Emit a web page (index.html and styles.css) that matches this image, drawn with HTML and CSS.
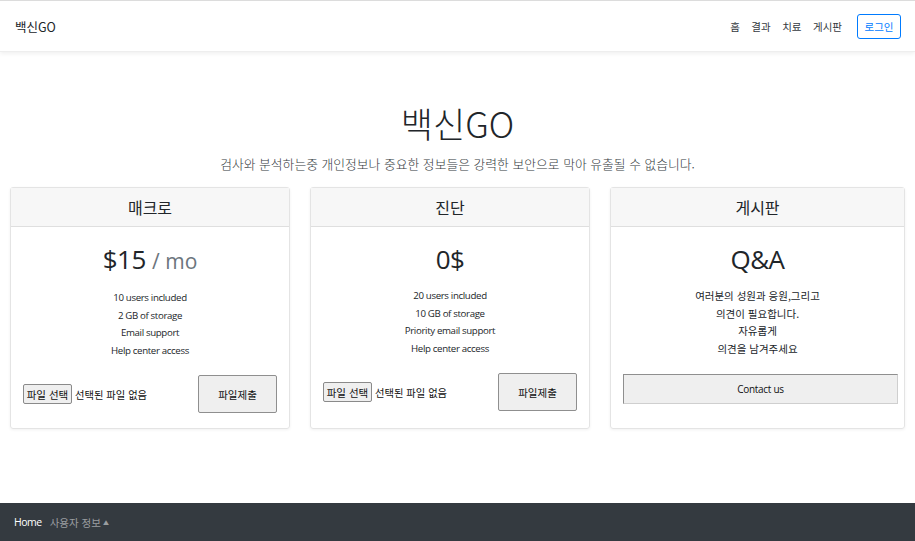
FILE: index.html
```html
<!DOCTYPE html>
<html lang="ko">
<head>
<meta charset="utf-8">
<title>백신GO</title>
<link rel="stylesheet" href="styles.css">
</head>
<body>
<header class="navbar">
  <a class="brand" href="#">백신GO</a>
  <nav class="nav">
    <a href="#">홈</a>
    <a href="#">결과</a>
    <a href="#">치료</a>
    <a href="#">게시판</a>
  </nav>
  <a class="login" href="#">로그인</a>
</header>

<section class="hero">
  <h1 class="title">백신GO</h1>
  <p class="lead">검사와 분석하는중 개인정보나 중요한 정보들은 강력한 보안으로 막아 유출될 수 없습니다.</p>
</section>

<main class="deck">
  <div class="card">
    <div class="card-header"><h4>매크로</h4></div>
    <div class="card-body">
      <h2 class="price">$15 <small>/ mo</small></h2>
      <ul class="features">
        <li>10 users included</li>
        <li>2 GB of storage</li>
        <li>Email support</li>
        <li>Help center access</li>
      </ul>
      <div class="upload">
        <div class="file"><span class="file-btn">파일 선택</span><span class="file-name">선택된 파일 없음</span></div>
        <button class="submit">파일제출</button>
      </div>
    </div>
  </div>
  <div class="card">
    <div class="card-header"><h4>진단</h4></div>
    <div class="card-body">
      <h2 class="price">0$</h2>
      <ul class="features">
        <li>20 users included</li>
        <li>10 GB of storage</li>
        <li>Priority email support</li>
        <li>Help center access</li>
      </ul>
      <div class="upload">
        <div class="file"><span class="file-btn">파일 선택</span><span class="file-name">선택된 파일 없음</span></div>
        <button class="submit">파일제출</button>
      </div>
    </div>
  </div>
  <div class="card">
    <div class="card-header"><h4>게시판</h4></div>
    <div class="card-body">
      <h2 class="price">Q&amp;A</h2>
      <ul class="features ko">
        <li>여러분의 성원과 응원,그리고</li>
        <li>의견이 필요합니다.</li>
        <li>자유롭게</li>
        <li>의견을 남겨주세요</li>
      </ul>
      <button class="contact">Contact us</button>
    </div>
  </div>
</main>

<footer class="footer">
  <a class="foot-home" href="#">Home</a>
  <a class="foot-user" href="#">사용자 정보<span class="caret">▲</span></a>
</footer>
</body>
</html>
```
FILE: styles.css
```css
* { box-sizing: border-box; }
html, body { margin: 0; padding: 0; }
body {
  width: 915px;
  height: 541px;
  overflow: hidden;
  font-family: "Open Sans", "Noto Sans CJK KR", sans-serif;
  color: #212529;
  background: #fff;
  display: flex;
  flex-direction: column;
  font-size: 11px;
}
a { text-decoration: none; }

.navbar {
  height: 52px;
  border-top: 1px solid #dcdcdc;
  display: flex;
  align-items: center;
  padding: 0 14px 0 15px;
  box-shadow: 0 2px 4px rgba(0,0,0,0.06);
  border-bottom: 1px solid #eeeeee;
}
.brand {
  font-family: "Noto Sans CJK KR", sans-serif;
  font-size: 12.5px;
  color: #212529;
  margin-right: auto;
}
.nav { display: flex; gap: 11.5px; margin-right: 15px; }
.nav a {
  font-family: "Noto Sans CJK KR", sans-serif;
  font-size: 10.5px;
  color: #343a40;
}
.login {
  font-family: "Noto Sans CJK KR", sans-serif;
  font-size: 10.5px;
  color: #007bff;
  border: 1px solid #007bff;
  border-radius: 3px;
  height: 25px;
  width: 44px;
  display: flex;
  align-items: center;
  justify-content: center;
}

.hero {
  text-align: center;
  padding-top: 47px;
}
.title {
  margin: 0;
  font-family: "Noto Sans CJK KR", sans-serif;
  font-weight: 300;
  font-size: 35px;
  line-height: 48px;
  color: #212529;
}
.lead {
  margin: 7px 0 0;
  font-family: "Noto Sans CJK KR", sans-serif;
  font-weight: 300;
  font-size: 12.8px;
  line-height: 20px;
  color: #343a40;
}

.deck {
  margin-top: 13px;
  padding: 0 10px;
  display: grid;
  grid-template-columns: 280px 280px 1fr;
  column-gap: 20px;
}
.card {
  border: 1px solid #e4e4e4;
  border-radius: 3px;
  box-shadow: 0 1px 3px rgba(0,0,0,0.06);
  height: 242px;
  display: flex;
  flex-direction: column;
}
.card-header {
  height: 39px;
  background: #f7f7f7;
  border-bottom: 1px solid #dfdfdf;
  display: flex;
  align-items: center;
  justify-content: center;
}
.card-header h4 {
  margin: 0;
  font-family: "Noto Sans CJK KR", sans-serif;
  font-weight: 400;
  font-size: 16px;
  color: #212529;
}
.card-body {
  padding: 13px 12px 0;
  text-align: center;
  display: flex;
  flex-direction: column;
}
.price {
  margin: 0;
  font-size: 26px;
  line-height: 38px;
  font-weight: 500;
  color: #212529;
  letter-spacing: -0.5px;
}
.price small {
  font-weight: 400;
  color: #6c757d;
  font-size: 21px;
  letter-spacing: 0;
}
.features {
  list-style: none;
  margin: 9px 0 0;
  padding: 0;
}
.features li {
  font-family: "Open Sans", "Noto Sans CJK KR", sans-serif;
  font-size: 9.7px;
  line-height: 17.6px;
  color: #212529;
  letter-spacing: -0.35px;
}
.features.ko li {
  font-family: "Noto Sans CJK KR", sans-serif;
  font-size: 10.5px;
  letter-spacing: 0;
}
.upload {
  margin-top: 16px;
  display: flex;
  align-items: center;
  justify-content: space-between;
}
.file { display: flex; align-items: center; }
.file-btn {
  font-family: "Noto Sans CJK KR", sans-serif;
  font-size: 10.5px;
  height: 20px;
  width: 49px;
  display: flex;
  align-items: center;
  justify-content: center;
  background: #efefef;
  border: 1px solid #8a8a8a;
  border-radius: 2px;
  color: #111;
}
.file-name {
  font-family: "Noto Sans CJK KR", sans-serif;
  font-size: 10.3px;
  margin-left: 3px;
  color: #111;
}
.submit {
  font-family: "Noto Sans CJK KR", sans-serif;
  font-size: 10.5px;
  width: 79px;
  height: 38px;
  background: #efefef;
  border: 1px solid #8f8f8f;
  border-radius: 2px;
  color: #111;
  padding: 0;
}
.contact {
  margin-top: 17px;
  width: calc(100% + 6px);
  height: 30px;
  font-family: "Open Sans", sans-serif;
  font-size: 10px;
  letter-spacing: -0.3px;
  background: #efefef;
  border: 1px solid #8f8f8f;
  border-right-color: #cfcfcf;
  border-bottom-color: #cfcfcf;
  border-radius: 0;
  color: #111;
}

.footer {
  margin-top: auto;
  height: 38px;
  background: #343a40;
  display: flex;
  align-items: center;
  padding-left: 14px;
  gap: 8px;
}
.foot-home {
  color: #fff;
  font-size: 10.5px;
  letter-spacing: -0.5px;
}
.foot-user {
  font-family: "Noto Sans CJK KR", sans-serif;
  color: #9a9da0;
  font-size: 10.5px;
}
.caret { font-size: 6px; margin-left: 2px; vertical-align: 2px; }
```
